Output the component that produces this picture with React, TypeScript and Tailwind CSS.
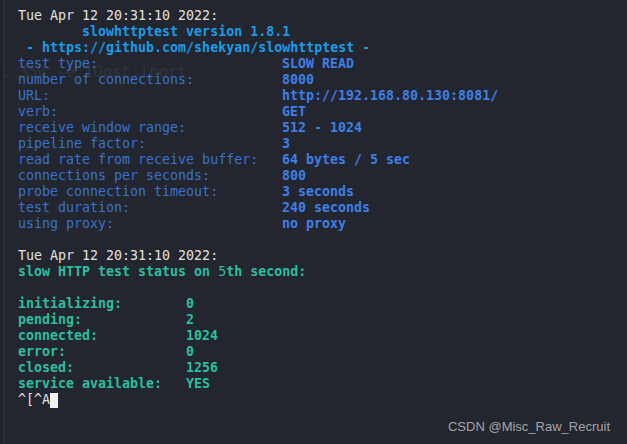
const mono = { fontFamily: '"DejaVu Sans Mono", "Liberation Mono", monospace' };

const config: [string, string][] = [
  ["test type:", "SLOW READ"],
  ["number of connections:", "8000"],
  ["URL:", "http://192.168.80.130:8081/"],
  ["verb:", "GET"],
  ["receive window range:", "512 - 1024"],
  ["pipeline factor:", "3"],
  ["read rate from receive buffer:", "64 bytes / 5 sec"],
  ["connections per seconds:", "800"],
  ["probe connection timeout:", "3 seconds"],
  ["test duration:", "240 seconds"],
  ["using proxy:", "no proxy"],
];

const status: [string, string][] = [
  ["initializing:", "0"],
  ["pending:", "2"],
  ["connected:", "1024"],
  ["error:", "0"],
  ["closed:", "1256"],
  ["service available:", "YES"],
];

export default function App() {
  return (
    <div className="relative w-[627px] h-[444px] overflow-hidden bg-[#1f2129]">
      <div className="ml-[3px] h-full border-l border-[#30333c] bg-[#23262f]">
        {/* faint leftover text from the window behind */}
        <div
          className="absolute left-0 top-[67px] whitespace-pre text-[15.5px] leading-[10px] text-[#30343d]"
          style={mono}
        >
          l 350 -e 1Oost:lport
        </div>

        <div
          className="relative whitespace-pre pl-[14px] pt-[8px] text-[13.3px] leading-[16px]"
          style={mono}
        >
          <div className="text-[#e2e2e2]">Tue Apr 12 20:31:10 2022:</div>
          <div className="font-bold text-[#1c9ce6]">{"        slowhttptest version 1.8.1"}</div>
          <div className="font-bold text-[#1c9ce6]">{" - https://github.com/shekyan/slowhttptest -"}</div>
          {config.map(([k, v]) => (
            <div key={k} className="flex">
              <span className="w-[264px] text-[#3a72cf]">{k}</span>
              <span className="font-bold text-[#3f7fe6]">{v}</span>
            </div>
          ))}
          <div>&nbsp;</div>
          <div className="text-[#e2e2e2]">Tue Apr 12 20:31:10 2022:</div>
          <div className="font-bold text-[#2cbf9f]">
            slow HTTP test status on <span className="font-normal">5</span>th second:
          </div>
          <div>&nbsp;</div>
          {status.map(([k, v]) => (
            <div key={k} className="flex font-bold text-[#2cbf9f]">
              <span className="w-[168px]">{k}</span>
              <span>{v}</span>
            </div>
          ))}
          <div className="flex items-center text-[#e2e2e2]">
            <span>^[^A</span>
            <span className="inline-block h-[15px] w-[8px] bg-[#f2f2f2]" />
          </div>
        </div>
      </div>

      <div
        className="absolute right-[17px] bottom-[8px] text-[13px] leading-[18px] text-[#a3a5a9]"
        style={{ fontFamily: '"Liberation Sans", Arial, sans-serif' }}
      >
        CSDN @Misc_Raw_Recruit
      </div>
    </div>
  );
}
